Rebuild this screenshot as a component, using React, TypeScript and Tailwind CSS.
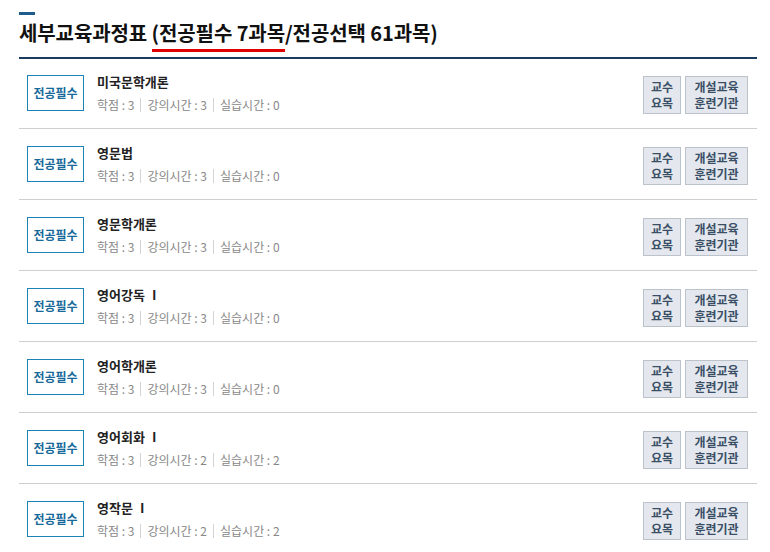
const courses = [
  { name: "미국문학개론", credit: 3, lecture: 3, practice: 0 },
  { name: "영문법", credit: 3, lecture: 3, practice: 0 },
  { name: "영문학개론", credit: 3, lecture: 3, practice: 0 },
  { name: "영어강독 Ⅰ", credit: 3, lecture: 3, practice: 0 },
  { name: "영어학개론", credit: 3, lecture: 3, practice: 0 },
  { name: "영어회화 Ⅰ", credit: 3, lecture: 2, practice: 2 },
  { name: "영작문 Ⅰ", credit: 3, lecture: 2, practice: 2 },
];

const font = {
  fontFamily: '"Noto Sans CJK KR", "Noto Sans", sans-serif',
};

function CourseRow({ course }: { course: (typeof courses)[number] }) {
  return (
    <li className="flex items-center h-[71px] border-b border-[#cfcfcf] pl-2 pr-[9px]">
      {/* Badge */}
      <div className="w-[57px] h-[36px] border-[1.5px] border-[#1f82b4] flex items-center justify-center text-[12px] font-bold text-[#17699a] shrink-0">
        전공필수
      </div>

      {/* Info */}
      <div className="ml-[13px] flex-1 flex flex-col">
        <span className="text-[13px] font-bold text-[#222] leading-[18px]">
          {course.name}
        </span>
        <div className="flex items-center text-[12px] text-[#888] leading-[16px] mt-[6px]">
          <span>학점 : {course.credit}</span>
          <span className="mx-[6px] h-[14px] border-l border-[#d4d4d4]" />
          <span>강의시간 : {course.lecture}</span>
          <span className="mx-[6px] h-[14px] border-l border-[#d4d4d4]" />
          <span>실습시간 : {course.practice}</span>
        </div>
      </div>

      {/* Buttons */}
      <div className="flex gap-[4px] mt-[3px]">
        <button className="w-[38px] h-[38px] bg-[#e4e8ee] border border-[#bcc2ca] text-[12px] leading-[16px] font-bold text-[#3a4f66] flex flex-col items-center justify-center">
          <span>교수</span>
          <span>요목</span>
        </button>
        <button className="w-[63px] h-[38px] bg-[#e4e8ee] border border-[#bcc2ca] text-[12px] leading-[16px] font-bold text-[#3a4f66] flex flex-col items-center justify-center">
          <span>개설교육</span>
          <span>훈련기관</span>
        </button>
      </div>
    </li>
  );
}

export default function App() {
  return (
    <div className="w-[770px] h-[552px] bg-white overflow-hidden pl-[19px] pr-[13px]" style={font}>
      <div className="pt-[12px]">
        <div className="w-[16px] h-[3px] bg-[#1d5c8c]" />
      </div>

      <h2 className="mt-[5px] text-[20px] font-bold text-[#111] leading-[26px] tracking-[-0.1px]">
        세부교육과정표{" "}
        <span className="relative">
          (전공필수 7과목
          <span className="absolute left-0 right-0 -bottom-[5px] h-[3px] bg-[#e00000]" />
        </span>
        /전공선택 61과목)
      </h2>

      <div className="mt-[11px] h-[2px] bg-[#1b3a5e]" />

      <ul className="-mt-[1px]">
        {courses.map((c) => (
          <CourseRow key={c.name} course={c} />
        ))}
      </ul>
    </div>
  );
}
